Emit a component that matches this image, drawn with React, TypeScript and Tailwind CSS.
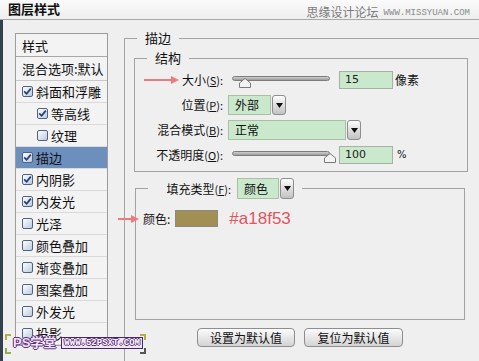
import React from "react";

const styleItems = [
  { label: "斜面和浮雕", checked: true, indent: false, selected: false },
  { label: "等高线", checked: true, indent: true, selected: false },
  { label: "纹理", checked: false, indent: true, selected: false },
  { label: "描边", checked: true, indent: false, selected: true },
  { label: "内阴影", checked: true, indent: false, selected: false },
  { label: "内发光", checked: true, indent: false, selected: false },
  { label: "光泽", checked: false, indent: false, selected: false },
  { label: "颜色叠加", checked: false, indent: false, selected: false },
  { label: "渐变叠加", checked: false, indent: false, selected: false },
  { label: "图案叠加", checked: false, indent: false, selected: false },
  { label: "外发光", checked: false, indent: false, selected: false },
  { label: "投影", checked: false, indent: false, selected: false },
];

function CheckBox({ checked }: { checked: boolean }) {
  return (
    <span className="flex h-[11px] w-[11px] shrink-0 items-center justify-center rounded-[2px] border border-[#4f6283] bg-linear-to-br from-[#ffffff] to-[#bccade]">
      {checked && (
        <svg width="9" height="9" viewBox="0 0 9 9">
          <path d="M1.2 4.4 L3.6 6.8 L7.8 1.6" fill="none" stroke="#243f73" strokeWidth="1.7" />
        </svg>
      )}
    </span>
  );
}

function Arrow({ len, className = "" }: { len: number; className?: string }) {
  return (
    <svg className={className} width={len} height="8" viewBox={`0 0 ${len} 8`} fill="#ec7a80">
      <rect x="0" y="3" width={len - 7} height="2" />
      <path d={`M${len - 8} 0 L${len} 4 L${len - 8} 8 Z`} />
    </svg>
  );
}

function Slider({ thumb }: { thumb: string }) {
  return (
    <div className="relative ml-[9px] h-[20px] w-[98px]">
      <div className="absolute left-0 right-0 top-[6px] h-[5px] rounded-full border border-[#7d7d7d] bg-linear-to-b from-[#cfcfcf] to-[#9c9c9c]" />
      <svg className={`absolute top-[8px] ${thumb}`} width="12" height="10" viewBox="0 0 12 10">
        <path d="M6 0.5 L11.5 5 V9.5 H0.5 V5 Z" fill="#f3f3f3" stroke="#7a7a7a" />
      </svg>
    </div>
  );
}

function Field({ value }: { value: string }) {
  return (
    <div className="ml-[9px] flex h-[18px] w-[54px] items-center border border-[#a3b2a3] bg-[#cae8cb] pl-[5px] font-['DejaVu_Sans',sans-serif] text-[11px] leading-[12px] text-[#222]">
      {value}
    </div>
  );
}

function Select({ label, width, className = "" }: { label: string; width: string; className?: string }) {
  return (
    <div className={`flex h-[20px] items-stretch ${className}`}>
      <div className={`flex items-center border border-[#a9bfa9] bg-[#cae8cb] pl-[6px] text-[12px] leading-[14px] ${width}`}>
        {label}
      </div>
      <div className="ml-px flex w-[14px] items-center justify-center rounded-[3px] border border-[#8d8d8d] bg-linear-to-b from-[#fdfdfd] to-[#c2c2c2]">
        <svg width="7" height="5" viewBox="0 0 7 5">
          <path d="M0 0 H7 L3.5 5 Z" fill="#111" />
        </svg>
      </div>
    </div>
  );
}

function Label({ children, arrow = false }: { children: React.ReactNode; arrow?: boolean }) {
  return (
    <div className="flex w-[88px] items-center justify-end gap-[3px] text-[12px] leading-[14px]">
      {arrow && <Arrow len={35} />}
      <span>{children}</span>
    </div>
  );
}

function Key({ k }: { k: string }) {
  return (
    <span className="text-[11px]">
      (<span className="underline">{k}</span>):
    </span>
  );
}

export default function App() {
  return (
    <div className="relative flex h-[361px] w-[479px] flex-col overflow-hidden bg-[#efefef] font-['Noto_Sans_CJK_SC',sans-serif] text-[#111]">
      {/* title bar */}
      <div className="flex h-[20px] shrink-0 items-end justify-between border-b border-[#a9a9a9] bg-linear-to-b from-[#fbfbfb] to-[#eeeeee]">
        <div className="pb-[3px] pl-[8px] text-[13px] font-bold leading-[14px]">图层样式</div>
        <div className="flex items-end gap-[5px] pb-px pr-[9px]">
          <span className="text-[12px] leading-[13px] text-[#7b7b7b]">思缘设计论坛</span>
          <span className="font-['Liberation_Mono',monospace] text-[9px] leading-[10px] text-[#8a8a8a]">WWW.MISSYUAN.COM</span>
        </div>
      </div>

      <div className="flex flex-1">
        <div className="w-[3px] shrink-0 bg-[#34404f]" />

        {/* style list */}
        <div className="ml-[12px] mt-[13px] w-[93px] shrink-0 self-start border border-[#9c9c9c] bg-[#f3f3f3] text-[13px] leading-[15px]">
          <div className="flex h-[23px] items-center border-b border-[#a8a8a8] pl-[6px]">样式</div>
          <div className="flex h-[24px] items-center border-b border-[#c9c9c9] pl-[6px]">混合选项:默认</div>
          {styleItems.map((it) => (
            <div
              key={it.label}
              className={`flex h-[22px] items-center gap-[3px] border-b border-[#dadada] ${it.indent ? "pl-[21px]" : "pl-[6px]"} ${it.selected ? "bg-[#6d8fbe]" : ""}`}
            >
              <CheckBox checked={it.checked} />
              <span>{it.label}</span>
            </div>
          ))}
        </div>

        {/* stroke panel */}
        <fieldset className="ml-[16px] mt-[10px] flex-1 border border-b-0 border-r-0 border-[#a3a3a3] pl-[9px]">
          <legend className="ml-[3px] px-[8px] text-[13px] leading-[16px]">描边</legend>

          <fieldset className="mt-[4px] w-[334px] border border-[#a3a3a3] pb-[6px]">
            <legend className="ml-[12px] px-[8px] text-[13px] leading-[16px]">结构</legend>
            <div className="mt-[4px] flex flex-col gap-[5px]">
              <div className="flex h-[20px] items-center">
                <Label arrow>
                  大小<Key k="S" />
                </Label>
                <Slider thumb="left-[7px]" />
                <Field value="15" />
                <span className="ml-[2px] text-[12px] leading-[14px]">像素</span>
              </div>
              <div className="flex h-[20px] items-center">
                <Label>
                  位置<Key k="P" />
                </Label>
                <Select label="外部" width="w-[43px]" className="ml-[5px]" />
              </div>
              <div className="flex h-[20px] items-center">
                <Label>
                  混合模式<Key k="B" />
                </Label>
                <Select label="正常" width="w-[118px]" className="ml-[5px]" />
              </div>
              <div className="flex h-[20px] items-center">
                <Label>
                  不透明度<Key k="O" />
                </Label>
                <Slider thumb="left-[92px]" />
                <Field value="100" />
                <span className="ml-[4px] font-['DejaVu_Sans',sans-serif] text-[10px] leading-[12px]">%</span>
              </div>
            </div>
          </fieldset>

          <fieldset className="ml-px mt-[6px] h-[142px] w-[330px] border border-[#a3a3a3]">
            <legend className="ml-[12px] pr-[8px]">
              <div className="flex h-[21px] items-center">
                <div className="w-[83px] text-right text-[12px] leading-[14px]">
                  填充类型<Key k="F" />
                </div>
                <Select label="颜色" width="w-[42px]" className="ml-[6px] h-[21px]" />
              </div>
            </legend>
            <div className="relative mt-[11px] flex h-[17px] items-center pl-[7px]">
              <Arrow len={21} className="absolute left-[-18px] top-[5px]" />
              <span className="text-[12px] leading-[14px]">颜色:</span>
              <div className="ml-[5px] h-[17px] w-[43px] border border-[#8a8a8a] bg-[#a18f53]" />
              <span className="ml-[11px] font-['Liberation_Sans',sans-serif] text-[17px] leading-[18px] text-[#e2545e]">#a18f53</span>
            </div>
          </fieldset>

          <div className="ml-px mt-[8px] flex w-[330px] justify-center gap-[9px] text-[12px] leading-[14px]">
            <button className="h-[19px] w-[98px] rounded-[4px] border border-[#8e8e8e] bg-linear-to-b from-[#fbfbfb] to-[#d4d4d4]">设置为默认值</button>
            <button className="h-[19px] w-[99px] rounded-[4px] border border-[#8e8e8e] bg-linear-to-b from-[#fbfbfb] to-[#d4d4d4]">复位为默认值</button>
          </div>
        </fieldset>
      </div>

      {/* bottom-left watermark */}
      <div className="absolute left-[5px] top-[332px] flex h-[22px] w-[141px] items-center whitespace-nowrap">
        <span className="absolute left-0 top-[2px] h-[6px] w-[6px] border-l-2 border-t-2 border-[#b3ad45]" />
        <span className="absolute bottom-0 left-0 h-[6px] w-[6px] border-b-2 border-l-2 border-[#8fb050]" />
        <span className="absolute right-0 top-[2px] h-[6px] w-[6px] border-r-2 border-t-2 border-[#b3ad45]" />
        <span className="absolute bottom-0 right-0 h-[6px] w-[6px] border-b-2 border-r-2 border-[#555]" />
        <span className="ml-[8px] shrink-0 font-['Liberation_Sans','Noto_Sans_CJK_SC',sans-serif] text-[13px] font-bold leading-[16px] text-[#efe4f7] [text-shadow:1px_0_#5b2d7b,-1px_0_#5b2d7b,0_1px_#5b2d7b,0_-1px_#5b2d7b]">
          PS学堂
        </span>
        <span className="ml-[5px] shrink-0 border border-[#4a2464] bg-[#efe6f5] px-[2px] font-['Liberation_Mono',monospace] text-[9px] font-bold leading-[10px] text-white [text-shadow:1px_0_#5b2d7b,-1px_0_#5b2d7b,0_1px_#5b2d7b,0_-1px_#5b2d7b]">
          WWW.52PSXT.COM
        </span>
      </div>
    </div>
  );
}
